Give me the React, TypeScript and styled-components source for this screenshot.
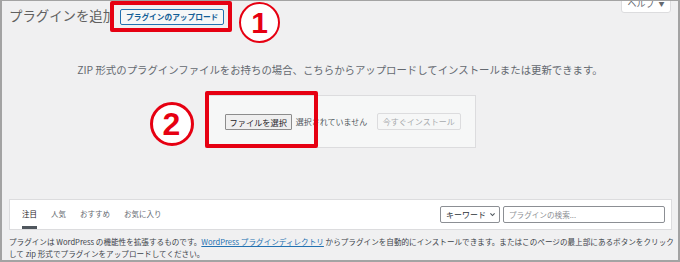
import styled, {createGlobalStyle} from 'styled-components';

const jp = `"Noto Sans CJK JP", "Liberation Sans", sans-serif`;
const red = '#e60012';

const GlobalStyle = createGlobalStyle`
  *, *::before, *::after {
    box-sizing: border-box;
  }
  body {
    margin: 0;
    font-family: ${jp};
    background: #fff;
  }
`;

const Frame = styled.div`
  position: relative;
  width: 680px;
  height: 262px;
  overflow: hidden;
  background: #f0f0f1;
  border: 2px solid #a3a3a3;
  border-top-width: 1px;
`;

const HelpTab = styled.div`
  position: absolute;
  top: -7px;
  right: 7px;
  width: 50px;
  height: 19px;
  background: #fff;
  border: 1px solid #dcdcde;
  border-radius: 0 0 3px 3px;
  display: flex;
  align-items: center;
  justify-content: center;
  gap: 4px;
  font-size: 9px;
  color: #646970;
  span {
    font-size: 6px;
  }
`;

const Header = styled.div`
  display: flex;
  align-items: flex-start;
  padding-left: 7px;
`;

const Title = styled.h1`
  margin: 5px 0 0;
  width: 101px;
  overflow: hidden;
  white-space: nowrap;
  font-size: 13.4px;
  font-weight: 400;
  line-height: 18px;
  color: #606060;
`;

const Marker = styled.div`
  border: 4px solid ${red};
  border-radius: 2px;
`;

const HeaderMarker = styled(Marker)`
  display: flex;
  align-items: center;
  width: 122px;
  height: 31px;
  padding: 0 0 0 6px;
`;

const UploadButton = styled.button`
  height: 16px;
  padding: 0 5px;
  border: 1px solid #2271b1;
  border-radius: 2px;
  background: #f6f7f7;
  color: #135e96;
  font-family: ${jp};
  font-size: 7.7px;
  font-weight: 600;
  line-height: 14px;
`;

const Circled = styled.div<{$size: number; $stroke: number}>`
  width: ${p => p.$size}px;
  height: ${p => p.$size}px;
  border-radius: 50%;
  border: ${p => p.$stroke}px solid ${red};
  background: #fff;
  color: ${red};
  display: flex;
  align-items: center;
  justify-content: center;
  font-family: "Liberation Sans", sans-serif;
  font-weight: 700;
`;

const HeaderCircle = styled(Circled)`
  margin: 1px 0 0 7px;
  font-size: 30px;
`;

const Description = styled.p`
  margin: 20px 0 0;
  text-align: center;
  font-size: 10.4px;
  line-height: 14px;
  color: #646970;
`;

const UploadArea = styled.div`
  display: flex;
  justify-content: center;
  margin-top: 18px;
`;

const UploadBox = styled.div`
  position: relative;
  width: 271px;
  height: 53px;
  background: #f6f7f7;
  border: 1px solid #dcdcde;
  display: flex;
  align-items: center;
  padding: 0 0 0 19px;
  font-size: 8px;
  color: #50575e;
`;

const FileButton = styled.button`
  height: 16px;
  padding: 0 4px;
  border: 1px solid #8c8c8c;
  border-radius: 1px;
  background: #efefef;
  color: #1d2327;
  font-family: ${jp};
  font-size: 8.2px;
  line-height: 14px;
`;

const NoFile = styled.span`
  margin-left: 4px;
  width: 81px;
  white-space: nowrap;
`;

const InstallButton = styled.button`
  height: 17px;
  padding: 0 5px;
  border: 1px solid #dcdcde;
  border-radius: 2px;
  background: #f6f7f7;
  color: #a7aaad;
  font-family: ${jp};
  font-size: 8px;
  line-height: 15px;
`;

const BoxMarker = styled(Marker)`
  position: absolute;
  left: -1px;
  top: -5px;
  width: 113px;
  height: 57px;
`;

const BoxCircle = styled(Circled)`
  position: absolute;
  left: -56px;
  top: 6px;
  font-size: 32px;
`;

const FilterBar = styled.div`
  margin: 51px 6px 0 7px;
  height: 31px;
  background: #fff;
  border: 1px solid #dcdcde;
  display: flex;
  align-items: stretch;
  justify-content: space-between;
  padding: 0 6px 0 12px;
`;

const Tabs = styled.ul`
  display: flex;
  gap: 14px;
  margin: 0;
  padding: 0;
  list-style: none;
`;

const Tab = styled.li<{$active?: boolean}>`
  display: flex;
  align-items: center;
  padding-top: 1px;
  font-size: 7.5px;
  color: ${p => (p.$active ? '#1d2327' : '#646970')};
  border-bottom: 3px solid ${p => (p.$active ? '#50575e' : 'transparent')};
`;

const Search = styled.div`
  display: flex;
  align-items: center;
  gap: 3px;
`;

const KeywordSelect = styled.div`
  width: 60px;
  height: 17px;
  border: 1px solid #8c8f94;
  border-radius: 2px;
  display: flex;
  align-items: center;
  justify-content: space-between;
  padding: 0 3px 0 5px;
  font-size: 8px;
  color: #2c3338;
  svg {
    width: 7px;
    height: 7px;
  }
`;

const SearchInput = styled.div`
  width: 162px;
  height: 17px;
  border: 1px solid #8c8f94;
  border-radius: 2px;
  display: flex;
  align-items: center;
  padding: 0 5px;
  font-size: 7.6px;
  color: #8c8f94;
`;

const Footer = styled.p`
  margin: 6px 2px 0 7px;
  font-size: 7.6px;
  line-height: 11.5px;
  color: #3c434a;
  a {
    color: #2271b1;
  }
`;

export default function App() {
  return (
    <>
      <GlobalStyle />
      <Frame>
        <HelpTab>
          ヘルプ <span>▼</span>
        </HelpTab>
        <Header>
          <Title>プラグインを追加</Title>
          <HeaderMarker>
            <UploadButton>プラグインのアップロード</UploadButton>
          </HeaderMarker>
          <HeaderCircle $size={41} $stroke={2}>1</HeaderCircle>
        </Header>
        <Description>
          ZIP 形式のプラグインファイルをお持ちの場合、こちらからアップロードしてインストールまたは更新できます。
        </Description>
        <UploadArea>
          <UploadBox>
            <FileButton>ファイルを選択</FileButton>
            <NoFile>選択されていません</NoFile>
            <InstallButton disabled>今すぐインストール</InstallButton>
            <BoxMarker />
            <BoxCircle $size={44} $stroke={3}>2</BoxCircle>
          </UploadBox>
        </UploadArea>
        <FilterBar>
          <Tabs>
            <Tab $active>注目</Tab>
            <Tab>人気</Tab>
            <Tab>おすすめ</Tab>
            <Tab>お気に入り</Tab>
          </Tabs>
          <Search>
            <KeywordSelect>
              キーワード
              <svg viewBox="0 0 10 10" fill="none" stroke="#50575e" strokeWidth="1.6">
                <path d="M2 3.5l3 3 3-3" />
              </svg>
            </KeywordSelect>
            <SearchInput>プラグインの検索...</SearchInput>
          </Search>
        </FilterBar>
        <Footer>
          プラグインは WordPress の機能性を拡張するものです。<a href="#">WordPress プラグインディレクトリ</a>{' '}
          からプラグインを自動的にインストールできます。またはこのページの最上部にあるボタンをクリックして zip 形式でプラグインをアップロードしてください。
        </Footer>
      </Frame>
    </>
  );
}
